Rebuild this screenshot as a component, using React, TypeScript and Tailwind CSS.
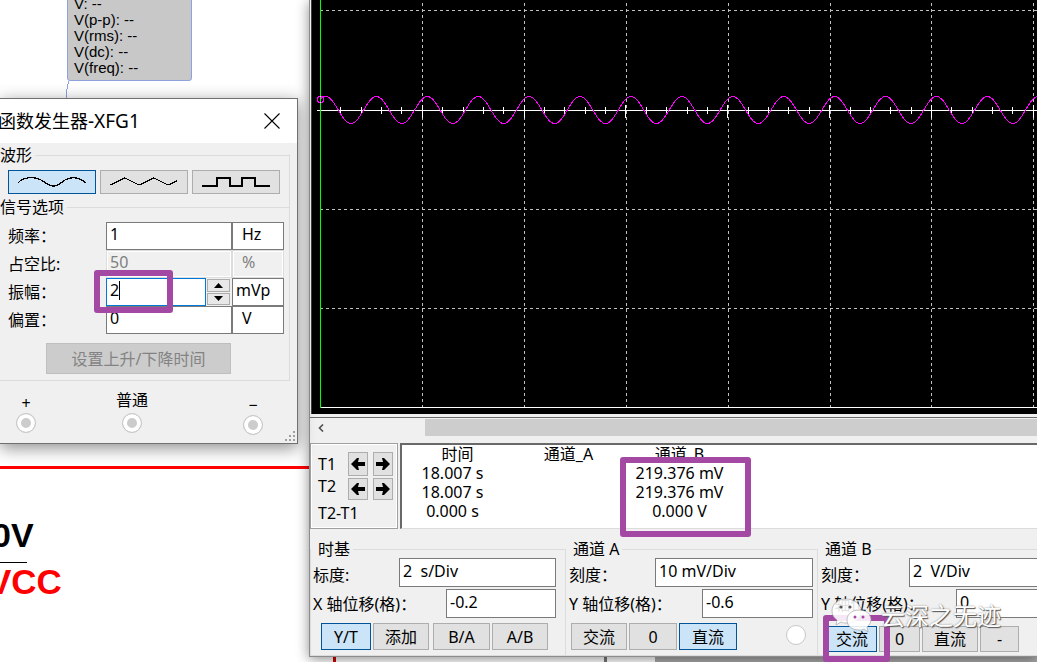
import type { ReactNode } from "react";

// Circuit canvas with two instrument windows floating on it: the function
// generator (XFG1) on the left and the oscilloscope on the right.

const FIELD = "min-w-0 border border-[#7a7a7a] bg-white px-[3px] pb-1 text-base leading-5 text-black outline-none";
const BUTTON = "flex items-center justify-center border border-[#adadad] bg-[#e1e1e1] text-base leading-5";
const ACTIVE = "flex items-center justify-center border border-[#005499] bg-[#cce4f7] text-base leading-5";

// Plot geometry, in px of the scope screen.
const ORIGIN = 8;
const DIV = 101.83;
const AXIS_Y = 110;
const COLUMNS = Array.from({ length: 20 }, (_, i) => ORIGIN + Math.ceil((i + 1) * DIV) + 0.5);
const TICKS = Array.from({ length: 100 }, (_, i) => i + 1);

function sinePoints() {
  const pts: string[] = [];
  for (let x = ORIGIN; x < 2040; x++) {
    const y = AXIS_Y - 13.5 * Math.cos(((x - 13.5) / (DIV / 2)) * Math.PI * 2);
    pts.push(`${x},${y.toFixed(2)}`);
  }
  return pts.join(" ");
}

function ScopeScreen() {
  return (
    <svg
      className="block h-[414px] w-full border-l border-[#404040] bg-black"
      shapeRendering="crispEdges"
      role="img"
      aria-label="Oscilloscope trace"
    >
      <g stroke="#c0c0c0" strokeDasharray="3 3">
        {[10.5, 209.5, 308.5].map((y) => (
          <line key={y} x1={ORIGIN} x2={2040} y1={y} y2={y} />
        ))}
        {COLUMNS.map((x) => (
          <line key={x} x1={x} x2={x} y1={3} y2={407} />
        ))}
      </g>
      <g stroke="#fff">
        <line x1={5} x2={2040} y1={110.5} y2={110.5} />
        <line x1={ORIGIN} x2={2040} y1={407.5} y2={407.5} />
        {TICKS.map((i) => {
          const x = Math.round(ORIGIN + (i * DIV) / 5) + 0.5;
          const major = i % 5 === 0;
          return <line key={i} x1={x} x2={x} y1={major ? 105 : 107} y2={major ? 118 : 114} />;
        })}
      </g>
      <polyline points={sinePoints()} fill="none" stroke="#f0f" />
      <line x1={8.5} x2={8.5} y1={0} y2={408} stroke="#0f0" />
      <path d="M6.500 96.500h4l1 2v2l-1 2h-4l-1-2v-2z" fill="none" stroke="#f0f" />
      <path d="M8.500 96v1M8.500 102v1" stroke="#fff" />
    </svg>
  );
}

function Arrow({ dir }: { dir: "left" | "right" }) {
  return (
    <svg width="14" height="14" viewBox="0 0 14 14" aria-hidden="true">
      <path d={dir === "left" ? "M0 7L6 1H8L7 5H14V9H7L8 13H6Z" : "M14 7L8 1H6L7 5H0V9H7L6 13H8Z"} fill="#000" />
    </svg>
  );
}

function Terminal({ label, id, labelClass = "" }: { label: string; id: string; labelClass?: string }) {
  return (
    <div className="flex flex-col items-center">
      <label htmlFor={id} className={`text-base leading-5 ${labelClass}`}>
        {label}
      </label>
      <input
        id={id}
        type="radio"
        name="terminal"
        className="size-5 appearance-none rounded-full border border-[#c8c8c8] bg-[#cccccc] ring-4 ring-white ring-inset"
      />
    </div>
  );
}

function SectionTitle({ children }: { children: ReactNode }) {
  return (
    <div className="flex h-5 items-center gap-[3px] whitespace-nowrap">
      <span className="text-base leading-5">{children}</span>
      <span className="h-px flex-1 bg-[#dcdcdc]" />
    </div>
  );
}

function GeneratorRow({ label, id, value, unit, off }: { label: string; id: string; value: string; unit: string; off?: boolean }) {
  const tone = off
    ? "min-w-0 border border-[#dcdcdc] bg-[#f0f0f0] px-[3px] pb-1 text-base leading-5 text-[#7f7f7f] inset-ring inset-ring-white"
    : FIELD;
  return (
    <div className="flex h-7">
      <label htmlFor={id} className="w-[98px] pt-1 text-base leading-5">
        {label}
      </label>
      <input id={id} className={`${tone} flex-1`} defaultValue={value} disabled={off} />
      <input aria-label={`${label} unit`} className={`${tone} w-[52px] indent-[6px]`} defaultValue={unit} disabled={off} />
    </div>
  );
}

function FunctionGenerator() {
  return (
    <section className="absolute top-[98px] left-0 w-[298px] border border-l-0 border-[#707070] bg-[#f0f0f0] shadow-[0_4px_16px_rgba(0,0,0,0.45)]">
      <header className="flex h-11 items-center justify-between bg-white pr-[17px] pb-px">
        <h1 className="-ml-[2px] text-lg leading-6">
          函数发生器<span className="text-[19px]">-XFG1</span>
        </h1>
        <button aria-label="Close">
          <svg width="16" height="16" viewBox="0 0 16 16" stroke="#000" strokeWidth="1.1">
            <path d="M.5.5l15 15M15.500.5l-15 15" />
          </svg>
        </button>
      </header>

      <div className="relative mr-[7px] border-r border-b border-[#dcdcdc] pt-[2px] pb-[6px]">
        <span className="absolute -top-px -right-px h-3 w-px bg-[#f0f0f0]" />
        <SectionTitle>波形</SectionTitle>
        <div className="mt-[5px] flex gap-1 px-2">
          <button className={`${ACTIVE} h-6 w-[88px]`} aria-label="Sine">
            <svg width="68" height="10" viewBox="0 0 68 10" fill="none" stroke="#000" strokeWidth="1.3" shapeRendering="crispEdges">
              <path d="M0 6C5 0 16-1 23 3S30 8 35 9S42 6 47 3S60-1 68 6" />
            </svg>
          </button>
          <button className={`${BUTTON} h-6 w-[88px]`} aria-label="Triangle">
            <svg width="68" height="10" viewBox="0 0 68 10" fill="none" stroke="#000" strokeWidth="1.3" shapeRendering="crispEdges">
              <path d="M0 8L15 1L29 8L44 1L58 8L67 4" />
            </svg>
          </button>
          <button className={`${BUTTON} h-6 w-[88px]`} aria-label="Square">
            <svg width="68" height="10" viewBox="0 0 68 10" fill="none" stroke="#000" strokeWidth="1.6" shapeRendering="crispEdges">
              <path d="M0 9H15V1H28V9H40V1H53V9H68" />
            </svg>
          </button>
        </div>
        <div className="mt-[3px]">
          <SectionTitle>信号选项</SectionTitle>
        </div>

        <div className="mt-[5px] mr-[5px] ml-2">
          <GeneratorRow label="频率：" id="freq" value="1" unit="Hz" />
          <GeneratorRow label="占空比:" id="duty" value="50" unit="%" off />
          <div className="relative flex h-7">
            <label htmlFor="amp" className="w-[98px] pt-1 text-base leading-5">
              振幅：
            </label>
            <div className="relative flex w-[100px]">
              <input
                id="amp"
                className="w-full border border-[#0078d7] bg-white px-[3px] pb-1 text-base leading-5 outline-none"
                defaultValue="2"
              />
              <span className="absolute top-[3px] left-[13px] h-[19px] w-px bg-black" />
            </div>
            <div className="flex flex-1 flex-col gap-px p-px pr-[2px]">
              <button className="flex flex-1 items-center justify-center border border-[#adadad] bg-[#e8e8e8]" aria-label="Increase">
                <svg width="9" height="5">
                  <path d="M0 5L4.500 0L9 5Z" />
                </svg>
              </button>
              <button className="flex flex-1 items-center justify-center border border-[#adadad] bg-[#e8e8e8]" aria-label="Decrease">
                <svg width="9" height="5">
                  <path d="M0 0L4.500 5L9 0Z" />
                </svg>
              </button>
            </div>
            <input aria-label="Amplitude unit" className={`${FIELD} w-[52px]`} defaultValue="mVp" />
            <span className="pointer-events-none absolute -top-2 left-[86px] z-10 h-[43px] w-[79px] rounded-[3px] border-6 border-[#a349a4]" />
          </div>
          <GeneratorRow label="偏置：" id="offset" value="0" unit="V" />
        </div>

        <button
          disabled
          className="mt-[9px] ml-[46px] h-[31px] w-[185px] border border-[#bfbfbf] bg-[#cccccc] text-base leading-5 text-[#838383]"
        >
          设置上升/下降时间
        </button>
      </div>

      <div className="flex items-start pt-[9px] pr-[34px] pb-2 pl-4">
        <Terminal label="+" id="plus" labelClass="pt-[3px]" />
        <div className="ml-20">
          <Terminal label="普通" id="common" labelClass="pb-[3px]" />
        </div>
        <div className="ml-auto">
          <Terminal label="−" id="minus" labelClass="pt-[5px]" />
        </div>
      </div>
      <svg className="absolute right-px bottom-px" width="11" height="11" fill="#a0a0a0" aria-hidden="true">
        <path d="M8 0h2v2h-2zM4 4h2v2h-2zM8 4h2v2h-2zM0 8h2v2h-2zM4 8h2v2h-2zM8 8h2v2h-2z" />
      </svg>
    </section>
  );
}

function CursorReadout() {
  return (
    <div className="flex h-[86px]">
      <div className="flex w-[88px] shrink-0 flex-col gap-[2px] border border-[#a0a0a0] pt-2 pl-[7px] inset-ring inset-ring-white">
        <div className="flex h-6 gap-[5px]">
          <span className="w-[25px] pt-[2px] text-base leading-5">T1</span>
          <button className={`${BUTTON} w-5`} aria-label="T1 back">
            <Arrow dir="left" />
          </button>
          <button className={`${BUTTON} w-5`} aria-label="T1 forward">
            <Arrow dir="right" />
          </button>
        </div>
        <div className="flex h-[22px] gap-[5px]">
          <span className="w-[25px] text-base leading-4">T2</span>
          <button className={`${BUTTON} w-5`} aria-label="T2 back">
            <Arrow dir="left" />
          </button>
          <button className={`${BUTTON} w-5`} aria-label="T2 forward">
            <Arrow dir="right" />
          </button>
        </div>
        <span className="pt-px text-base leading-5">T2-T1</span>
      </div>
      <div className="relative ml-[2px] flex-1 border-t-2 border-b border-l-2 border-t-[#696969] border-b-[#dcdcdc] border-l-[#696969] bg-white">
        <table className="w-[333px] table-fixed text-center text-base leading-[19px]">
          <thead>
            <tr>
              <th className="p-0 font-normal">时间</th>
              <th className="p-0 font-normal">通道_A</th>
              <th className="p-0 font-normal">通道_B</th>
            </tr>
          </thead>
          <tbody>
            <tr>
              <td className="p-0 pr-[10px]">18.007 s</td>
              <td />
              <td className="p-0">219.376 mV</td>
            </tr>
            <tr>
              <td className="p-0 pr-[10px]">18.007 s</td>
              <td />
              <td className="p-0">219.376 mV</td>
            </tr>
            <tr>
              <td className="p-0 pr-[10px]">0.000 s</td>
              <td />
              <td className="p-0">0.000 V</td>
            </tr>
          </tbody>
        </table>
        <span className="pointer-events-none absolute top-3 left-[218px] z-10 h-20 w-[131px] rounded-[3px] border-6 border-[#a349a4]" />
      </div>
    </div>
  );
}

type ChannelProps = {
  id: string;
  title: string;
  scaleLabel: string;
  scale: string;
  shiftLabel: string;
  shift: string;
  rowClass: string;
  inputClass?: string;
  children: ReactNode;
};

function ControlGroup({ id, title, scaleLabel, scale, shiftLabel, shift, rowClass, inputClass = "", children }: ChannelProps) {
  return (
    <fieldset className="relative min-w-0 border-b border-[#dcdcdc] pb-[3px] pl-1 whitespace-nowrap">
      <span className="absolute top-[10px] bottom-0 left-0 w-px bg-[#dcdcdc]" />
      <div className="flex h-5 items-center gap-[3px]">
        <legend className="ml-1 text-base leading-5">{title}</legend>
        <span className="h-px flex-1 bg-[#dcdcdc]" />
      </div>
      <div className={`-mt-px flex h-[29px] ${rowClass}`}>
        <label htmlFor={`${id}-scale`} className="w-[86px] pt-[7px] text-base leading-5">
          {scaleLabel}
        </label>
        <input id={`${id}-scale`} className={`${FIELD} flex-1 whitespace-pre ${inputClass}`} defaultValue={scale} />
      </div>
      <div className={`mt-[2px] flex h-[29px] ${rowClass}`}>
        <label htmlFor={`${id}-shift`} className="w-[133px] pt-[5px] text-base leading-5">
          {shiftLabel}
        </label>
        <input id={`${id}-shift`} className={`${FIELD} flex-1 ${inputClass}`} defaultValue={shift} />
      </div>
      {children}
    </fieldset>
  );
}

function Oscilloscope() {
  return (
    <section className="absolute top-0 right-0 left-[309px] border-b border-l border-[#8c8c8c] bg-[#f0f0f0] shadow-[0_2px_12px_rgba(0,0,0,0.45)]">
      <div className="border-b border-[#696969] pb-[3px] pl-px">
        <ScopeScreen />
      </div>
      <div className="flex h-[18px] items-stretch pt-px">
        <button className="flex w-[22px] items-center justify-center" aria-label="Scroll left">
          <svg width="6" height="8" fill="none" stroke="#505050" strokeWidth="1.6">
            <path d="M5 .5L1.500 4L5 7.500" />
          </svg>
        </button>
        <div className="flex-1 pl-[93px]">
          <div className="h-full bg-[#cdcdcd]" />
        </div>
      </div>
      <div className="mt-[7px]">
        <CursorReadout />
      </div>

      <div className="mt-[10px] grid grid-cols-[255px_252px_1fr]">
        <ControlGroup
          id="time"
          title="时基"
          scaleLabel="标度:"
          scale="2  s/Div"
          shiftLabel="X 轴位移(格)："
          shift="-0.2"
          rowClass="-ml-px mr-[9px]"
        >
          <div className="mt-[5px] ml-[7px] flex h-[27px] gap-[2px]">
            <button className={`${ACTIVE} w-[50px]`}>Y/T</button>
            <button className={`${BUTTON} w-14`}>添加</button>
            <button className={`${BUTTON} ml-[2px] w-[57px]`}>B/A</button>
            <button className={`${BUTTON} w-14`}>A/B</button>
          </div>
        </ControlGroup>
        <ControlGroup
          id="cha"
          title="通道 A"
          scaleLabel="刻度："
          scale="10 mV/Div"
          shiftLabel="Y 轴位移(格)："
          shift="-0.6"
          rowClass="mr-1"
        >
          <div className="mt-[5px] ml-[2px] flex h-[27px] items-stretch gap-[2px]">
            <button className={`${BUTTON} w-14`}>交流</button>
            <button className={`${BUTTON} w-12`}>0</button>
            <button className={`${ACTIVE} w-[58px]`}>直流</button>
            <input
              type="radio"
              aria-label="Channel A terminal"
              className="mt-[2px] mr-[11px] ml-auto size-5 appearance-none rounded-full border border-[#c8c8c8] bg-white"
            />
          </div>
        </ControlGroup>
        <ControlGroup
          id="chb"
          title="通道 B"
          scaleLabel="刻度："
          scale="2  V/Div"
          shiftLabel="Y 轴位移(格)："
          shift="0"
          rowClass="-mr-4"
          inputClass="ml-[2px]"
        >
          <div className="relative mt-2 ml-[6px] flex h-[26px] gap-[2px]">
            <button className={`${ACTIVE} w-[50px]`}>交流</button>
            <button className={`${BUTTON} w-[41px]`}>0</button>
            <button className={`${BUTTON} w-14`}>直流</button>
            <button className={`${BUTTON} w-[39px]`}>-</button>
            <span className="pointer-events-none absolute -top-[11px] -left-1 h-[47px] w-[67px] rounded-[3px] border-6 border-[#a349a4]" />
            <Watermark />
          </div>
        </ControlGroup>
      </div>
    </section>
  );
}

function Watermark() {
  return (
    <div className="pointer-events-none absolute -top-7 left-1 flex items-center gap-2">
      <svg width="42" height="36" viewBox="0 0 42 36" aria-hidden="true">
        <g fill="#fff" fillOpacity="0.88" stroke="#9a9a9a" strokeWidth="0.6">
          <path d="M15 1C7 1 1 6 1 13c0 4 2 7 5 9l-1 5 5-3c2 1 3 1 6 1 7 0 14-5 14-12S23 1 15 1z" />
          <path d="M28 12c-7 0-12 4-12 10s5 10 12 10c2 0 3 0 5-1l4 3-1-5c2-2 4-4 4-7 0-6-5-10-12-10z" />
        </g>
        <g fill="#555">
          <circle cx="10" cy="9" r="1.600" />
          <circle cx="19" cy="9" r="1.600" />
        </g>
        <g fill="#a349a4">
          <circle cx="24" cy="19" r="1.500" />
          <circle cx="32" cy="19" r="1.500" />
        </g>
      </svg>
      <span className="text-2xl leading-8 text-white [text-shadow:1px_1px_1px_#555,0_0_2px_#888]">云深之无迹</span>
    </div>
  );
}

function Schematic() {
  return (
    <>
      <svg className="absolute inset-0 h-full w-full" shapeRendering="crispEdges" aria-hidden="true">
        <path d="M68.500 81L66.500 92V98" stroke="#8ea2de" fill="none" />
        <path d="M0 467.500H310" stroke="#f00" strokeWidth="3" />
        <path d="M0 562.500H27" stroke="#000" />
        <path d="M334.500 655V1000" stroke="#d00000" strokeWidth="3" />
        <path d="M605.500 655V1000" stroke="#777" strokeWidth="3" />
        <rect x="655" y="655" width="2000" height="1000" fill="#a8a8a8" />
      </svg>
      <div className="absolute -top-2 left-[67px] w-[125px] rounded-[3px] border border-[#8ea2de] bg-[#c8c8c8] px-[6px] pt-[3px] pb-1 font-['Liberation_Sans',Arial,sans-serif] text-[15px] leading-4">
        <p>V: --</p>
        <p>V(p-p): --</p>
        <p>V(rms): --</p>
        <p>V(dc): --</p>
        <p>V(freq): --</p>
      </div>
      <p className="absolute top-[515px] -left-2 font-['Liberation_Sans',Arial,sans-serif] text-[34px] leading-10 font-bold">0V</p>
      <p className="absolute top-[562px] -left-3 font-['Liberation_Sans',Arial,sans-serif] text-[35px] leading-10 font-bold text-[#ff0000]">
        VCC
      </p>
    </>
  );
}

export default function App() {
  return (
    <main className="relative min-h-screen overflow-hidden bg-white font-['Noto_Sans','Noto_Sans_CJK_SC',sans-serif] text-black">
      <Schematic />
      <Oscilloscope />
      <FunctionGenerator />
    </main>
  );
}
